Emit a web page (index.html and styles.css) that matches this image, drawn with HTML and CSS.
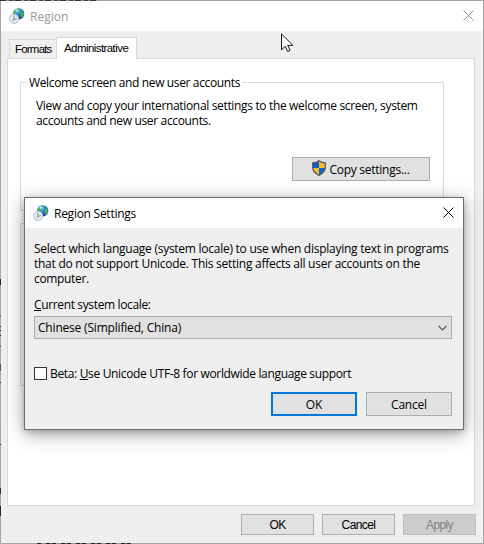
FILE: index.html
```html
<!DOCTYPE html>
<html lang="en">
<head>
<meta charset="utf-8">
<title>Region</title>
<link rel="stylesheet" href="styles.css">
</head>
<body>
<svg class="defs" width="0" height="0" aria-hidden="true">
  <defs>
    <radialGradient id="ocean" cx="45%" cy="30%" r="75%"><stop offset="0" stop-color="#55b9f4"/><stop offset=".55" stop-color="#1969c8"/><stop offset="1" stop-color="#102b82"/></radialGradient>
    <symbol id="region" viewBox="0 0 16 16">
      <circle cx="9.700" cy="5.800" r="5.600" fill="url(#ocean)"/>
      <path d="M5 3Q7 .5 9.500.8L10 2 8 4 7 6 5 6zM11 3l2-.5 2 3-.5 3-2 1-1-2 1-2z" fill="#43b843"/>
      <path d="M6 2.500Q8 1 10 2L8 4z" fill="#c5eff5"/>
      <circle cx="5" cy="10.800" r="4.700" fill="#e3e9ed" stroke="#aab4bb" stroke-width=".8"/>
      <path d="M5 7.500v3.800l2.800-.6M5 11l-1.800 1.800" fill="none" stroke="#74838e" stroke-width=".9"/>
    </symbol>
  </defs>
</svg>
<main class="window">
  <header class="titlebar inactive">
    <svg class="app-icon" width="16" height="16"><use href="#region"/></svg>
    <span class="title">Region</span>
    <svg class="close" width="11" height="11" viewBox="0 0 11 11"><path d="M.5.5l10 10m0-10l-10 10"/></svg>
  </header>
  <nav class="tabs"><div class="tab"><span>Formats</span></div><div class="tab active"><span>Administrative</span></div></nav>
  <section class="panel">
    <div class="group first">
      <h2><span class="t-legend">Welcome screen and new user accounts</span></h2>
      <p><span class="t-view">View and copy your international settings to the welcome screen, system</span><span class="t-accounts">accounts and new user accounts.</span></p>
      <button class="button copy">
        <svg width="14" height="16" viewBox="0 0 14 16"><path d="M7 .7Q9.500 2.700 13.300 2.800V7c0 4-2.800 6.500-6.300 8.300C3.500 13.500.7 11 .7 7V2.800Q4.500 2.700 7 .7z" fill="#ffba35"/><path d="M7 .7V8H.7V2.800Q4.500 2.700 7 .7zM7 8h6.300c-.2 3.500-3 5.700-6.300 7.300z" fill="#0865c4"/><path d="M7 .7Q9.500 2.700 13.300 2.800V7c0 4-2.800 6.500-6.300 8.300C3.500 13.500.7 11 .7 7V2.800Q4.500 2.700 7 .7z" fill="none" stroke="#565a5c" stroke-width="1.300"/></svg>
        <span class="t-copy">Copy settings...</span>
      </button>
    </div>
    <div class="group second"></div>
  </section>
  <footer class="actions"><button class="button">OK</button><button class="button">Cancel</button><button class="button disabled">Apply</button></footer>
</main>
<div class="edge edge-left"></div>
<div class="edge edge-top"></div>
<div class="edge edge-bottom"></div>
<section class="dialog">
  <header class="titlebar">
    <svg class="app-icon" width="16" height="16"><use href="#region"/></svg>
    <span class="title t-dialog">Region Settings</span>
    <svg class="close" width="11" height="11" viewBox="0 0 11 11"><path d="M.5.5l10 10m0-10l-10 10"/></svg>
  </header>
  <div class="content">
    <p><span class="t-select">Select which language (system locale) to use when displaying text in programs</span><span class="t-that">that do not support Unicode. This setting affects all user accounts on the</span><span class="t-computer">computer.</span></p>
    <div class="label"><span class="t-current"><u>C</u>urrent system locale:</span></div>
    <div class="combo"><span class="t-chinese">Chinese (Simplified, China)</span><svg width="9" height="6" viewBox="0 0 9 6"><path d="M.5.8l4 4 4-4"/></svg></div>
    <div class="check"><i></i><span class="t-beta">Beta: <u>U</u>se Unicode UTF-8 for worldwide language support</span></div>
    <div class="dialog-actions"><button class="button primary">OK</button><button class="button">Cancel</button></div>
  </div>
</section>
<svg class="cursor" width="13" height="20" viewBox="0 0 13 20"><path d="M.5.8v16l3.700-3.500 2.500 5.200 2.400-1.100-2.400-5h5.100z"/></svg>
</body>
</html>
```

FILE: styles.css
```css
* { box-sizing: border-box; }
body { margin: 0; width: 484px; height: 544px; position: relative; overflow: hidden; color: #000; font: 12px/15px "Open Sans", sans-serif; }
.defs { position: absolute; }
p, h2 { margin: 0; font: inherit; }
span { white-space: nowrap; }
p span { display: block; }
.window { height: 544px; border: 1px solid #a5a5a5; background: #efefef; display: flex; flex-direction: column; }
/* Dark marks of the page behind, showing through the window's translucent border */
.edge { position: absolute; }
.edge-left { left: 0; top: 0; width: 1px; height: 544px; background: linear-gradient(#222 0 0) 0 279px/1px 6px no-repeat, linear-gradient(#777 0 0) 0 315px/1px 2px no-repeat, linear-gradient(#222 0 0) 0 326px/1px 1px no-repeat, linear-gradient(#222 0 0) 0 330px/1px 1px no-repeat, linear-gradient(#222 0 0) 0 335px/1px 1px no-repeat, linear-gradient(#777 0 0) 0 345px/1px 2px no-repeat, linear-gradient(#555 0 0) 0 364px/1px 7px no-repeat, linear-gradient(#222 0 0) 0 382px/1px 1px no-repeat, linear-gradient(#222 0 0) 0 444px/1px 1px no-repeat, linear-gradient(#333 0 0) 0 488px/1px 6px no-repeat, linear-gradient(#222 0 0) 0 506px/1px 10px no-repeat; }
.edge-top { left: 0; top: 0; width: 99px; height: 1px; background: repeating-linear-gradient(90deg, #333 0 6px, #999 6px 9px, #444 9px 13px, #888 13px 15px); }
.edge-bottom { left: 37px; top: 543px; width: 94px; height: 1px; background: repeating-linear-gradient(90deg, #222 0 4px, #999 4px 9px, #222 9px 13px, #777 13px 15px); }
.titlebar { height: 30px; flex: none; background: #fff; display: flex; align-items: center; padding: 0 9px 0 8px; }
.app-icon { flex: none; margin-right: 5px; }
.titlebar .title { flex: 1; }
.close { stroke: #000; stroke-width: 1; fill: none; margin-top: -2px; }
.inactive { color: #999; }
.inactive .close { stroke: #999; }
.tabs { height: 28px; flex: none; margin: 0 8px -1px; display: flex; align-items: flex-end; position: relative; z-index: 1; font: 11.5px/14px "Liberation Sans", sans-serif; }
.tab { width: 47px; height: 19px; border: 1px solid #d9d9d9; border-right: 0; border-bottom: 0; background: #f0f0f0; padding: 2px 0 0 5px; letter-spacing: -.8px; margin-bottom: 1px; }
.tab.active { width: 81px; height: 22px; border: 1px solid #d9d9d9; border-bottom: 0; background: #fff; padding: 3px 0 0 7px; letter-spacing: -.57px; margin-bottom: 0; }
.panel { width: 468px; height: 448px; margin-left: 6px; border: 1px solid #d9d9d9; background: #fff; padding: 23px 30px 0 12px; flex: none; }
.group { width: 424px; border: 1px solid #dcdcdc; }
.first { height: 129px; padding-left: 15px; display: flex; flex-direction: column; }
.first h2 { height: 15px; margin: -8px 0 8px -9px; align-self: flex-start; padding: 0 2px; background: #fff; }
.second { height: 163px; margin-top: 12px; }
.t-legend, .t-current { letter-spacing: -.36px; }
.t-view, .t-accounts, .t-computer { letter-spacing: -.34px; }
.t-select, .t-that, .t-dialog, .t-copy { letter-spacing: -.26px; }
.t-chinese { letter-spacing: -.19px; }
.t-beta { letter-spacing: -.34px; }
.button { border: 1px solid #adadad; border-radius: 0; background: #e1e1e1; color: #000; padding: 0; margin: 0; font: inherit; display: flex; align-items: center; justify-content: center; }
.copy { width: 138px; height: 24px; align-self: flex-end; margin: 29px 13px 0 0; gap: 3px; }
.copy svg { margin-top: -2px; }
.actions { display: flex; gap: 8px; padding: 8px 0 0 240px; font: 12px/14px "Liberation Sans", sans-serif; letter-spacing: -.6px; }
.actions .button { width: 73px; height: 21px; letter-spacing: inherit; }
.actions .disabled { background: #ccc; border-color: #bfbfbf; color: #838383; }
.dialog { position: absolute; left: 24px; top: 197px; width: 440px; height: 233px; border: 1px solid #6d6d6d; background: #efefef; box-shadow: 0 4px 18px rgba(0,0,0,.35), 0 2px 6px rgba(0,0,0,.2); }
.content { padding: 13px 11px 0 9px; }
.label { margin-top: 11px; }
u { text-underline-offset: 1px; }
.combo { height: 23px; margin-top: 4px; border: 1px solid #adadad; background: #e1e1e1; display: flex; align-items: center; justify-content: space-between; padding: 0 4px 0 3px; }
.combo path { fill: none; stroke: #555; stroke-width: 1.2; }
.check { height: 15px; margin-top: 27px; display: flex; align-items: center; gap: 3px; }
.check i { width: 13px; height: 13px; border: 1px solid #333; background: #fff; }
.dialog-actions { display: flex; justify-content: flex-end; gap: 9px; margin-top: 11px; }
.dialog-actions .button { width: 86px; height: 24px; letter-spacing: -.2px; }
.dialog-actions .primary { border: 2px solid #0078d7; }
.cursor { position: absolute; left: 281px; top: 33px; }
.cursor path { fill: #fff; stroke: #181824; stroke-width: 1; }
```
